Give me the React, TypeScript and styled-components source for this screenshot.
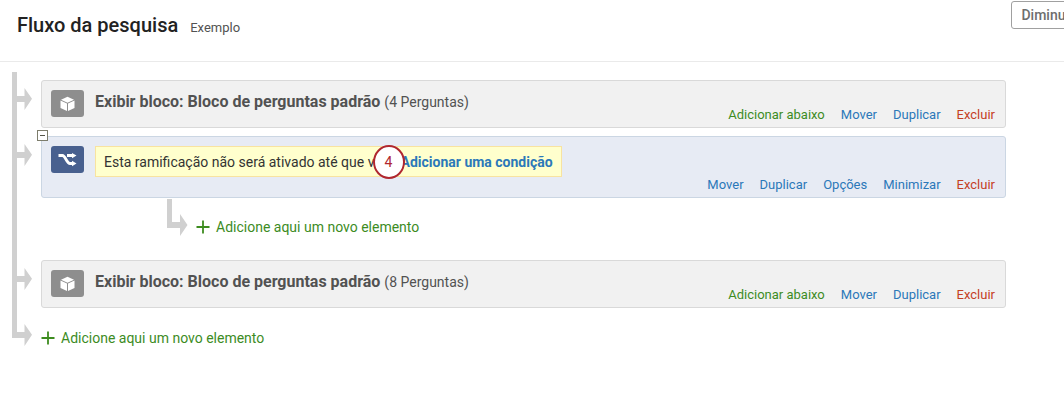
import React from "react";
import styled, { createGlobalStyle, css } from "styled-components";

const GlobalStyle = createGlobalStyle`
  *, *::before, *::after { box-sizing: border-box; }
  body {
    margin: 0;
    background: #fff;
    color: #525252;
    font-family: Roboto, "Liberation Sans", sans-serif;
    font-size: 14px;
    line-height: 20px;
    overflow-x: hidden;
  }
`;

type Tone = "green" | "blue" | "red";
const tones: Record<Tone, string> = { green: "#3d8c1f", blue: "#2b78b9", red: "#c5401f" };

const Page = styled.div`
  overflow: hidden;
`;

const Header = styled.header`
  display: flex;
  align-items: flex-start;
  height: 62px;
  padding-left: 17px;
  border-bottom: 1px solid #eaeaea;
`;

const Heading = styled.div`
  display: flex;
  align-items: baseline;
  gap: 12px;
  flex: 1;
  padding-top: 12px;
`;

const Title = styled.h1`
  margin: 0;
  color: #222;
  font-size: 20px;
  font-weight: 500;
  line-height: 26px;
`;

const SurveyName = styled.span`
  font-size: 13px;
`;

const CollapseButton = styled.button`
  flex: none;
  height: 28px;
  margin: 1px -20px 0 0;
  padding: 0 9px;
  border: 1px solid #a0a0a0;
  border-radius: 3px;
  background: #fff;
  color: #6e6e6e;
  font: 500 14px/20px Roboto, "Liberation Sans", sans-serif;
`;

const Tree = styled.ul`
  list-style: none;
  margin: 0;
  padding: 10px 58px 0 12px;
`;

const Row = styled.li`
  display: flex;
`;

const Trunk = styled.div<{ $last?: boolean }>`
  flex: none;
  width: 29px;
  padding-top: 16px;
  background: linear-gradient(#d0d0d0, #d0d0d0) no-repeat 0 0 / 5px ${(p) => (p.$last ? "30px" : "100%")};
  svg { display: block; }
`;

const Content = styled.div`
  flex: 1;
  min-width: 0;
  padding-top: 8px;
`;

const Block = styled.section<{ $branch?: boolean }>`
  position: relative;
  display: flex;
  gap: 11px;
  min-height: 48px;
  padding: 9px 10px 2px 9px;
  border: 1px solid #d9d9d9;
  border-radius: 3px;
  background: #f1f1f1;
  ${(p) =>
    p.$branch &&
    css`
      min-height: 62px;
      border-color: #cbd6e3;
      background: #e7ebf4;
    `}
`;

const Badge = styled.span<{ $branch?: boolean }>`
  display: flex;
  align-items: center;
  justify-content: center;
  flex: none;
  width: 33px;
  height: 27px;
  border-radius: 3px;
  background: ${(p) => (p.$branch ? "#48608f" : "#8e8e8e")};
`;

const BlockTitle = styled.h2`
  flex: 1;
  margin: 2px 0 0;
  font-size: 16px;
  font-weight: 700;
  line-height: 20px;
  small {
    font-size: 14px;
    font-weight: 400;
  }
`;

const Actions = styled.nav`
  display: flex;
  align-self: flex-end;
  gap: 16px;
`;

const ActionLink = styled.a<{ $tone: Tone }>`
  color: ${(p) => tones[p.$tone]};
  font-size: 13px;
  text-decoration: none;
`;

const NoticeArea = styled.div`
  flex: 1;
`;

const Notice = styled.p`
  display: inline-block;
  margin: 0;
  padding: 5px 8px 4px;
  border: 1px solid #f8e3a0;
  background: #ffffcd;
  color: #333;
  white-space: nowrap;
`;

const ConditionLink = styled.a`
  position: relative;
  color: ${tones.blue};
  font-weight: 700;
  text-decoration: none;
`;

const StepMarker = styled.span`
  position: absolute;
  top: -9px;
  left: -28px;
  display: flex;
  align-items: center;
  justify-content: center;
  width: 32px;
  height: 34px;
  border: 2px solid #b0272f;
  border-radius: 50%;
  background: #fff;
  color: #b0272f;
  font-weight: 400;
`;

const Toggle = styled.button`
  position: absolute;
  top: -7px;
  left: -5px;
  display: flex;
  padding: 0;
  border: 0;
  background: none;
`;

const Nested = styled.div`
  display: flex;
  height: 54px;
  padding: 1px 0 0 126px;
`;

const AddRow = styled.div<{ $root?: boolean }>`
  padding-top: ${(p) => (p.$root ? "12px" : "18px")};
`;

const AddLink = styled.a`
  display: inline-flex;
  align-items: center;
  gap: 6px;
  color: ${tones.green};
  text-decoration: none;
`;

const Arrow = () => (
  <svg width="20" height="22" viewBox="0 0 20 22" aria-hidden="true">
    <path d="M0 8H12.500V0L20 10.800L12.500 22V14H0Z" fill="#d0d0d0" />
  </svg>
);

const Elbow = () => (
  <svg width="29" height="38" viewBox="0 0 29 38" aria-hidden="true">
    <path d="M0 0H5V23H13V15L20.500 26L13 37V29H0Z" fill="#d0d0d0" />
  </svg>
);

const Cube = () => (
  <svg width="15" height="16" viewBox="0 0 15 16" aria-hidden="true">
    <path d="M7.500 .8L14 3.700L7.500 6.700L1 3.700Z" fill="#fff" />
    <path d="M.5 4.500L7 7.500V15L.5 12Z M14.500 4.500L8 7.500V15L14.500 12Z" fill="#fff" />
  </svg>
);

const Branch = () => (
  <svg width="19" height="14" viewBox="0 0 19 14" aria-hidden="true">
    <path d="M.5 2.500H4.500C7.500 2.500 8.500 10.500 12 10.500H15 M9 2.500H15" fill="none" stroke="#fff" strokeWidth="2.800" />
    <path d="M14 0L18.500 2.600L14 5.300Z M14 7.800L18.500 10.500L14 13.200Z" fill="#fff" />
  </svg>
);

const AddElement = () => (
  <AddLink href="#novo">
    <svg width="14" height="14" viewBox="0 0 14 14" aria-hidden="true">
      <path d="M7 .5V13.500M.5 7H13.500" stroke="#3d8c1f" strokeWidth="1.800" />
    </svg>
    Adicione aqui um novo elemento
  </AddLink>
);

const blockActions: [string, Tone][] = [
  ["Adicionar abaixo", "green"],
  ["Mover", "blue"],
  ["Duplicar", "blue"],
  ["Excluir", "red"],
];
const branchActions: [string, Tone][] = [
  ["Mover", "blue"],
  ["Duplicar", "blue"],
  ["Opções", "blue"],
  ["Minimizar", "blue"],
  ["Excluir", "red"],
];

const ActionList = ({ items }: { items: [string, Tone][] }) => (
  <Actions>
    {items.map(([label, tone]) => (
      <ActionLink key={label} href="#acao" $tone={tone}>{label}</ActionLink>
    ))}
  </Actions>
);

const QuestionBlock = ({ count }: { count: number }) => (
  <Row>
    <Trunk><Arrow /></Trunk>
    <Content>
      <Block>
        <Badge><Cube /></Badge>
        <BlockTitle>
          Exibir bloco: Bloco de perguntas padrão <small>({count} Perguntas)</small>
        </BlockTitle>
        <ActionList items={blockActions} />
      </Block>
    </Content>
  </Row>
);

export default function App() {
  return (
    <Page>
      <GlobalStyle />
      <Header>
        <Heading>
          <Title>Fluxo da pesquisa</Title>
          <SurveyName>Exemplo</SurveyName>
        </Heading>
        <CollapseButton type="button">Diminuir</CollapseButton>
      </Header>
      <Tree>
        <QuestionBlock count={4} />
        <Row>
          <Trunk><Arrow /></Trunk>
          <Content>
            <Block $branch>
              <Toggle type="button" aria-label="Recolher">
                <svg width="11" height="11" viewBox="0 0 11 11" aria-hidden="true">
                  <rect x=".5" y=".5" width="10" height="10" fill="#fff" stroke="#7d7d6c" />
                  <path d="M3 5.500H8" stroke="#55554a" />
                </svg>
              </Toggle>
              <Badge $branch><Branch /></Badge>
              <NoticeArea>
                <Notice>
                  Esta ramificação não será ativado até que você{" "}
                  <ConditionLink href="#condicao">
                    Adicionar uma condição
                    <StepMarker>4</StepMarker>
                  </ConditionLink>
                </Notice>
              </NoticeArea>
              <ActionList items={branchActions} />
            </Block>
            <Nested>
              <Elbow />
              <AddRow><AddElement /></AddRow>
            </Nested>
          </Content>
        </Row>
        <QuestionBlock count={8} />
        <Row>
          <Trunk $last><Arrow /></Trunk>
          <Content>
            <AddRow $root><AddElement /></AddRow>
          </Content>
        </Row>
      </Tree>
    </Page>
  );
}
